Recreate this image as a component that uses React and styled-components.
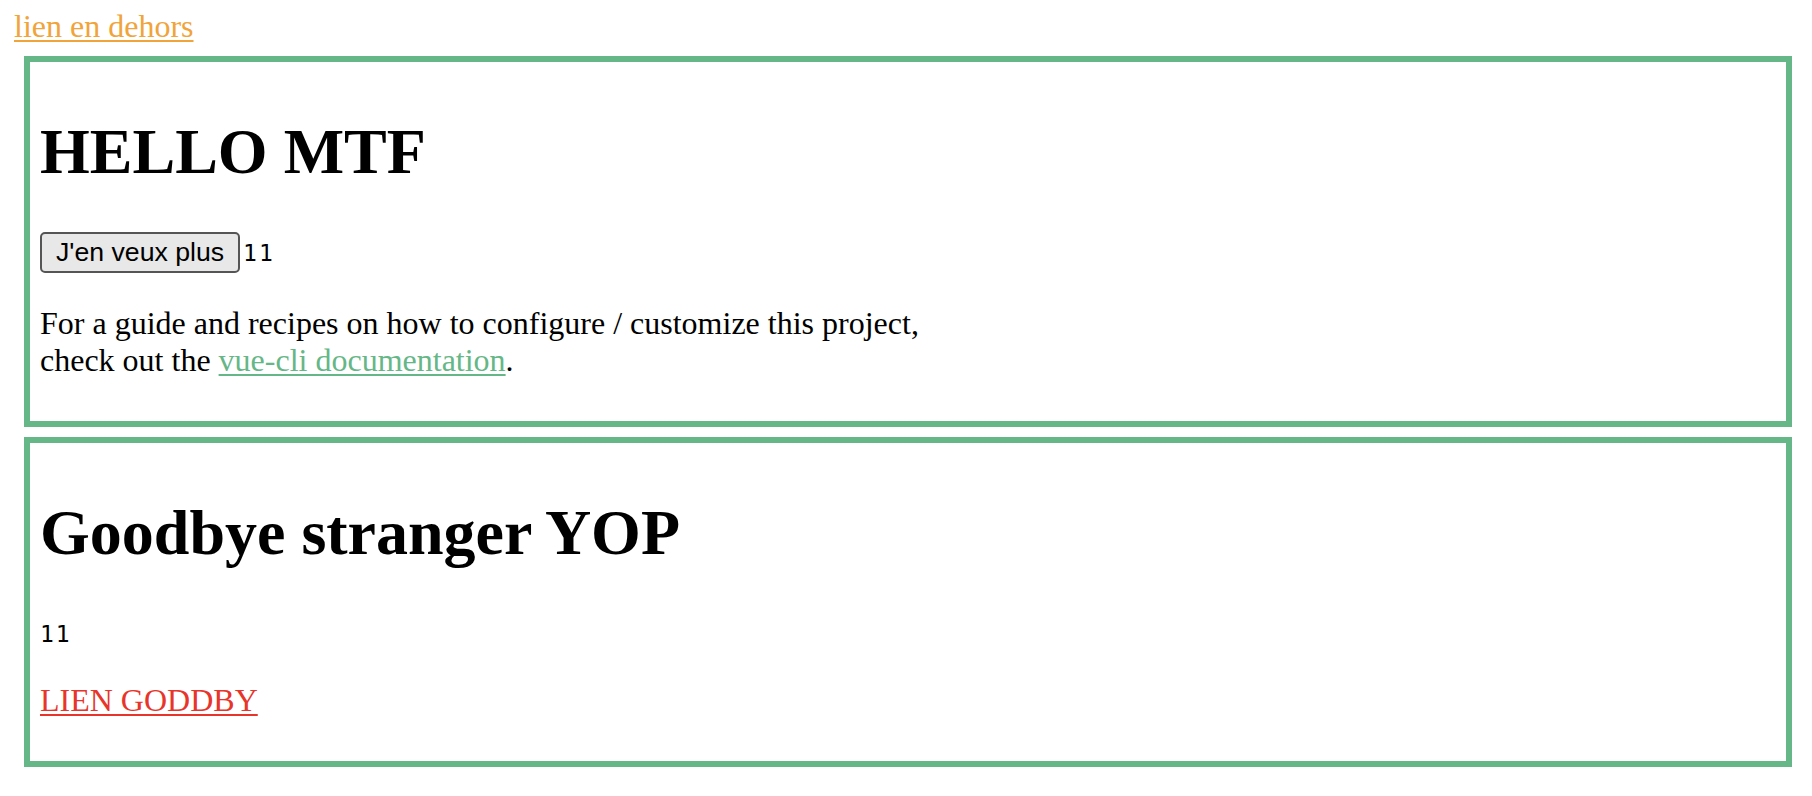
import React, { useState } from "react";
import styled, { createGlobalStyle } from "styled-components";

const GlobalStyle = createGlobalStyle`
  body {
    margin: 0;
    background: #fff;
    color: #000;
    font-family: "Liberation Serif", "Times New Roman", serif;
    font-size: 32px;
  }
`;

const Page = styled.div`
  padding: 8px 20px 20px 14px;
`;

const OutLink = styled.a`
  color: ${(p) => p.color};
  text-decoration: underline;
  text-underline-offset: 3px;
  text-decoration-thickness: 2px;
`;

const Panel = styled.section`
  margin: ${(p) => (p.first ? "11px" : "10px")} 0 0 10px;
  border: 6px solid #66b787;
  padding: 10px;
`;

const Title = styled.h1`
  font-size: 64px;
  font-weight: 700;
  margin: 0.67em 0;
`;

const Para = styled.p`
  margin: 32px 0;
`;

const MoreButton = styled.button`
  display: inline-block;
  box-sizing: border-box;
  height: 41px;
  padding: 0 14px;
  margin: 0;
  font-family: "Liberation Sans", Arial, sans-serif;
  font-size: 26.67px;
  line-height: 35px;
  color: #000;
  background: #e8e8e8;
  border: 2px solid #555;
  border-radius: 5px;
  vertical-align: baseline;
  cursor: pointer;
`;

const Count = styled.span`
  font-family: "DejaVu Sans Mono", "Liberation Mono", monospace;
  font-size: 23px;
  line-height: 1;
  letter-spacing: 2px;
  margin-left: ${(p) => (p.spaced ? "3px" : "0")};
`;

const Hello = ({ count, onMore }) => (
  <Panel first>
    <Title>HELLO MTF</Title>
    <Para>
      <MoreButton onClick={onMore}>J'en veux plus</MoreButton>
      <Count spaced>{count}</Count>
    </Para>
    <Para>
      For a guide and recipes on how to configure / customize this project,
      <br />
      check out the{" "}
      <OutLink color="#66b787" href="#">
        vue-cli documentation
      </OutLink>
      .
    </Para>
  </Panel>
);

const Goodbye = ({ count }) => (
  <Panel>
    <Title>Goodbye stranger YOP</Title>
    <Para>
      <Count>{count}</Count>
    </Para>
    <Para>
      <OutLink color="#e8352b" href="#">
        LIEN GODDBY
      </OutLink>
    </Para>
  </Panel>
);

export default function App() {
  const [count, setCount] = useState(11);

  return (
    <Page>
      <GlobalStyle />
      <OutLink color="#f0a43a" href="#">
        lien en dehors
      </OutLink>
      <Hello count={count} onMore={() => setCount(count + 1)} />
      <Goodbye count={count} />
    </Page>
  );
}
